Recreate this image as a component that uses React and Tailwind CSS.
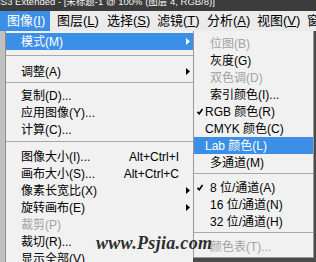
const font = { fontFamily: '"Liberation Sans", "Noto Sans CJK SC", sans-serif' };

function Arrow({ white }) {
  return (
    <svg width="4" height="7" viewBox="0 0 4 7">
      <path d="M0 0L4 3.5L0 7Z" fill={white ? "#fff" : "#000"} />
    </svg>
  );
}

function Check() {
  return (
    <svg width="6" height="7" viewBox="0 0 6 7">
      <path d="M0.5 3.8L2.2 5.8L5.5 1" stroke="#000" strokeWidth="1.6" fill="none" />
    </svg>
  );
}

const bar = [
  ["图像", "I"],
  ["图层", "L"],
  ["选择", "S"],
  ["滤镜", "T"],
  ["分析", "A"],
  ["视图", "V"],
  ["窗口", "W"],
];

const mainItems = [
  { t: "模式(M)", arrow: true, hi: true },
  { sep: "h-[13px] pt-[5px]" },
  { t: "调整(A)", arrow: true },
  { sep: "h-[7px] pt-[2px]" },
  { t: "复制(D)..." },
  { t: "应用图像(Y)..." },
  { t: "计算(C)..." },
  { sep: "h-[10px] pt-[3px]" },
  { t: "图像大小(I)...", key: "Alt+Ctrl+I" },
  { t: "画布大小(S)...", key: "Alt+Ctrl+C" },
  { t: "像素长宽比(X)", arrow: true },
  { t: "旋转画布(E)", arrow: true },
  { t: "裁剪(P)", off: true },
  { t: "裁切(R)..." },
  { t: "显示全部(V)" },
];

const subItems = [
  { t: "位图(B)", off: true, cjk: true },
  { t: "灰度(G)", cjk: true },
  { t: "双色调(D)", off: true, cjk: true },
  { t: "索引颜色(I)...", cjk: true },
  { t: "RGB 颜色(R)", check: true },
  { t: "CMYK 颜色(C)" },
  { t: "Lab 颜色(L)", hi: true },
  { t: "多通道(M)", cjk: true },
  { sep: true },
  { t: "8 位/通道(A)", check: true, cjk: true },
  { t: "16 位/通道(N)", cjk: true },
  { t: "32 位/通道(H)", cjk: true },
  { sep: true },
  { t: "颜色表(T)...", off: true, cjk: true },
];

export default function App() {
  return (
    <div className="relative w-[316px] h-[262px] overflow-hidden bg-[#4a4a4a] text-black" style={font}>
      {/* TITLE */}
      <div className="h-[11px] overflow-hidden bg-[#3c3c3c]">
        <div className="ml-[-6px] mt-[-4px] text-[9.5px] leading-[12px] text-[#f4f4f4] whitespace-nowrap">
          CS3 Extended - [未标题-1 @ 100% (图层 4, RGB/8)]
        </div>
      </div>

      {/* MENU BAR */}
      <div className="flex h-[20px] bg-[#ebebeb]">
        {bar.map(([t, k], i) => (
          <div
            key={t}
            className={`w-[50px] shrink-0 pl-[7px] flex items-center text-[13px] whitespace-nowrap ${
              i === 0 ? "bg-[#3b8fe6] text-white" : ""
            }`}
          >
            {t}(<span className="underline">{k}</span>)
          </div>
        ))}
      </div>

      {/* MENUS */}
      <div className="flex items-start">
        <div className="w-[5px] h-[240px] bg-[#c0c0c0] shrink-0" />

        {/* MAIN MENU */}
        <div className="w-[188px] h-[240px] shrink-0 border-l border-[#8e8e8e] bg-[#f1f1f1] pt-[2px] text-[12px]">
          {mainItems.map((it, i) =>
            it.sep ? (
              <div key={i} className={it.sep}>
                <div className="border-t border-[#a8a8a8]" />
              </div>
            ) : (
              <div
                key={i}
                className={`h-[17px] flex items-center pl-[15px] pr-[3px] whitespace-nowrap ${
                  it.hi ? "bg-[#3b8fe6] text-white" : it.off ? "text-[#a3a3a3]" : ""
                }`}
              >
                <span className="flex-1">{it.t}</span>
                {it.key && <span>{it.key}</span>}
                <span className="w-[11px] flex justify-end">{it.arrow && <Arrow white={it.hi} />}</span>
              </div>
            )
          )}
        </div>

        {/* SUB MENU */}
        <div className="w-[121px] shrink-0 border-l border-r border-b border-[#9a9a9a] bg-[#f1f1f1] pt-[4px] pb-[2px] text-[12px]">
          {subItems.map((it, i) =>
            it.sep ? (
              <div key={i} className="h-[8px] pt-[2px]">
                <div className="border-t border-[#a8a8a8]" />
              </div>
            ) : (
              <div
                key={i}
                className={`h-[17px] flex items-center whitespace-nowrap ${
                  it.hi ? "bg-[#3b8fe6] text-white" : it.off ? "text-[#a3a3a3]" : ""
                }`}
              >
                <span className="w-[11px] shrink-0 pl-[3px] flex items-center">{it.check && <Check />}</span>
                <span className={it.cjk ? "ml-[5px]" : ""}>{it.t}</span>
              </div>
            )
          )}
        </div>
      </div>

      {/* WATERMARK */}
      <div
        className="absolute left-[96px] top-[234px] text-[18px] leading-[18px] font-bold italic tracking-[0.3px] text-[#2e2e2e] whitespace-nowrap"
        style={{ fontFamily: '"Liberation Serif", serif' }}
      >
        www.Psjia.com
      </div>
    </div>
  );
}
